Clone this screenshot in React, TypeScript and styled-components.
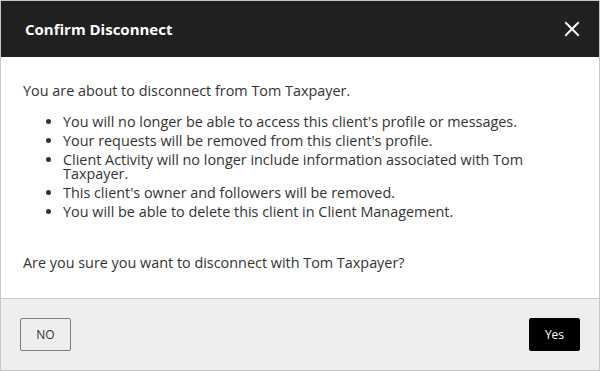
import { createGlobalStyle, styled } from 'styled-components';

const GlobalStyle = createGlobalStyle`
	html, body {
		margin: 0;
		padding: 0;
		background: #ffffff;
	}
	body {
		font-family: 'Open Sans', 'Noto Sans', sans-serif;
		-webkit-font-smoothing: antialiased;
	}
`;

const bullets = [
	"You will no longer be able to access this client's profile or messages.",
	"Your requests will be removed from this client's profile.",
	'Client Activity will no longer include information associated with Tom Taxpayer.',
	"This client's owner and followers will be removed.",
	'You will be able to delete this client in Client Management.',
];

const App = () => {
	return (
		<>
			<GlobalStyle />
			<Dialog>
				<Header>
					<Title>Confirm Disconnect</Title>
					<CloseButton aria-label="Close">
						<svg width="16" height="16" viewBox="0 0 16 16">
							<path d="M2 2 L14 14 M14 2 L2 14" stroke="#ffffff" strokeWidth="2" strokeLinecap="square" />
						</svg>
					</CloseButton>
				</Header>
				<Body>
					<Paragraph>You are about to disconnect from Tom Taxpayer.</Paragraph>
					<BulletList>
						{bullets.map((text) => (
							<li key={text}>{text}</li>
						))}
					</BulletList>
					<Paragraph>Are you sure you want to disconnect with Tom Taxpayer?</Paragraph>
				</Body>
				<Footer>
					<Button>NO</Button>
					<Button $primary>Yes</Button>
				</Footer>
			</Dialog>
		</>
	);
};

const Dialog = styled.div`
	width: 600px;
	height: 371px;
	box-sizing: border-box;
	border: 1px solid #c6c6c6;
	display: flex;
	flex-direction: column;
	background: #ffffff;
`;

const Header = styled.header`
	height: 56px;
	background: #202020;
	display: flex;
	align-items: center;
	justify-content: space-between;
	padding: 0 19px 0 24px;
`;

const Title = styled.h1`
	margin: 0;
	color: #ffffff;
	font-size: 15px;
	font-weight: 700;
	line-height: 20px;
`;

const CloseButton = styled.button`
	background: none;
	border: none;
	padding: 0;
	width: 16px;
	height: 16px;
	display: flex;
	cursor: pointer;
`;

const Body = styled.section`
	flex: 1;
	padding: 24px 22px 24px 22px;
	color: #333333;
	font-size: 14.4px;
`;

const Paragraph = styled.p`
	margin: 0;
	line-height: 20px;
`;

const BulletList = styled.ul`
	margin: 14px 0 34px;
	padding-left: 40px;
	line-height: 14px;

	li {
		margin-bottom: 5px;
	}
	li:last-child {
		margin-bottom: 0;
	}
`;

const Footer = styled.footer`
	height: 72px;
	box-sizing: border-box;
	border-top: 1px solid #cccccc;
	background: #eeeeee;
	display: flex;
	align-items: center;
	justify-content: space-between;
	padding: 0 19px 0 19px;
`;

const Button = styled.button<{ $primary?: boolean }>`
	height: 33px;
	min-width: 51px;
	padding: 0 12px;
	border-radius: 2px;
	font-family: 'Open Sans', 'Noto Sans', sans-serif;
	font-size: 12px;
	cursor: pointer;
	border: 1px solid ${(p) => (p.$primary ? '#000000' : '#7a7a7a')};
	background: ${(p) => (p.$primary ? '#000000' : 'transparent')};
	color: ${(p) => (p.$primary ? '#ffffff' : '#333333')};
`;

export default App;
